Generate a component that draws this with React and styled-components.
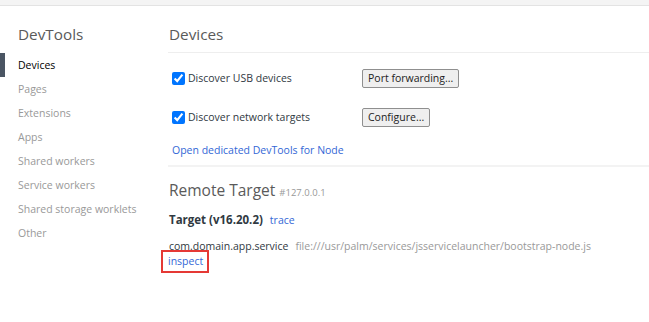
import React from 'react'
import styled, { createGlobalStyle } from 'styled-components';

const GlobalStyle = createGlobalStyle`
    body {
        margin: 0;
        background: #fff;
        font-family: "Open Sans", "Noto Sans", sans-serif;
        font-size: 10.5px;
        color: #303942;
    }
`;

const navItems = [
    'Devices',
    'Pages',
    'Extensions',
    'Apps',
    'Shared workers',
    'Service workers',
    'Shared storage worklets',
    'Other',
];

const App = () => {
    return (
        <Page>
            <GlobalStyle />
            <TopBar />
            <Layout>
                <Sidebar>
                    <SideTitle>DevTools</SideTitle>
                    {navItems.map((item, i) => (
                        <NavItem key={item} selected={i === 0}>{item}</NavItem>
                    ))}
                </Sidebar>
                <Main>
                    <Heading>Devices</Heading>
                    <Section>
                        <OptionRow top={15}>
                            <Check>
                                <input type='checkbox' defaultChecked />
                                Discover USB devices
                            </Check>
                            <Button>Port forwarding...</Button>
                        </OptionRow>
                        <OptionRow top={19}>
                            <Check>
                                <input type='checkbox' defaultChecked />
                                Discover network targets
                            </Check>
                            <Button>Configure...</Button>
                        </OptionRow>
                        <NodeLink>Open dedicated DevTools for Node</NodeLink>
                    </Section>
                    <SubHeading>
                        Remote Target <Host>#127.0.0.1</Host>
                    </SubHeading>
                    <TargetTitle>
                        Target (v16.20.2) <Link>trace</Link>
                    </TargetTitle>
                    <TargetRow>
                        <Name>com.domain.app.service</Name>
                        <Url>file:///usr/palm/services/jsservicelauncher/bootstrap-node.js</Url>
                    </TargetRow>
                    <Actions>
                        <Inspect>inspect</Inspect>
                    </Actions>
                </Main>
            </Layout>
        </Page>
    )
}

const Page = styled.div`
    width: 649px;
    height: 322px;
    overflow: hidden;
`;

const TopBar = styled.div`
    height: 5px;
    background: #f4f4f4;
    border-bottom: 1px solid #e3e3e3;
`;

const Layout = styled.div`
    display: flex;
`;

const Sidebar = styled.div`
    width: 168px;
    flex-shrink: 0;
`;

const SideTitle = styled.div`
    height: 47px;
    line-height: 57px;
    padding-left: 18px;
    font-size: 15.3px;
    color: #5a5a5a;
    box-sizing: border-box;
`;

const NavItem = styled.div`
    height: 24px;
    line-height: 24px;
    padding-left: 18px;
    color: ${props => props.selected ? '#000' : '#999'};
    box-shadow: ${props => props.selected ? 'inset 5px 0 0 #4a5563' : 'none'};
`;

const Main = styled.div`
    flex: 1;
`;

const Heading = styled.div`
    height: 47px;
    line-height: 57px;
    padding-left: 1px;
    font-size: 15.3px;
    color: #5a5a5a;
    border-bottom: 1px solid #eee;
    box-sizing: border-box;
`;

const SubHeading = styled.div`
    height: 36px;
    line-height: 46px;
    padding-left: 1px;
    font-size: 15.5px;
    color: #5a5a5a;
`;

const Host = styled.span`
    font-size: 9.5px;
    color: #999;
`;

const Section = styled.div`
    padding-left: 4px;
    padding-bottom: 6px;
    border-bottom: 2px solid #f3f3f3;
`;

const OptionRow = styled.div`
    display: flex;
    align-items: center;
    height: 20px;
    margin-top: ${props => props.top}px;
`;

const Check = styled.label`
    width: 190px;
    display: flex;
    align-items: center;
    color: #303942;
    input {
        margin: 0 3px 0 0;
        width: 13px;
        height: 13px;
    }
`;

const Button = styled.button`
    height: 19px;
    padding: 0 5px;
    font-family: inherit;
    font-size: 10.5px;
    color: #222;
    background: #efefef;
    border: 1px solid #8f8f8f;
    border-radius: 2px;
`;

const NodeLink = styled.div`
    margin-top: 14px;
    height: 18px;
    line-height: 18px;
    color: #3367d6;
`;

const TargetTitle = styled.div`
    margin-top: 6px;
    height: 22px;
    line-height: 22px;
    padding-left: 1px;
    font-weight: bold;
    font-size: 11.5px;
    color: #303942;
`;

const Link = styled.span`
    margin-left: 4px;
    font-weight: normal;
    font-size: 10.5px;
    color: #3367d6;
`;

const TargetRow = styled.div`
    display: flex;
    gap: 7px;
    margin-top: 7px;
    padding-left: 1px;
    height: 16px;
    line-height: 16px;
`;

const Name = styled.span`
    color: #303942;
`;

const Url = styled.span`
    color: #999;
`;

const Actions = styled.div`
    display: flex;
`;

const Inspect = styled.span`
    display: inline-block;
    margin: -4px 0 0 -7px;
    padding: 1px 4px 2px 5px;
    height: 16px;
    line-height: 16px;
    color: #3367d6;
    border: 2px solid #e53935;
`;

export default App;
